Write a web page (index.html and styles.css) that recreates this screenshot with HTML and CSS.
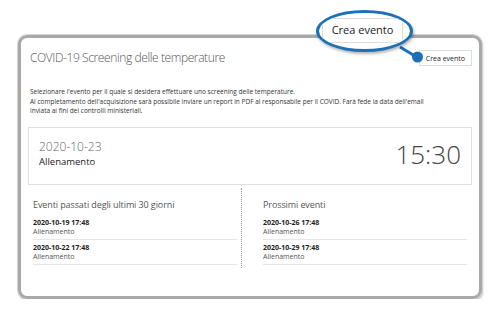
FILE: index.html
```html
<!DOCTYPE html>
<html lang="it">

<head>
    <meta charset="UTF-8">
    <meta name="viewport" content="width=device-width, initial-scale=1.0">
    <title>COVID-19 Screening delle temperature</title>
    <link rel="stylesheet" href="styles.css">
</head>

<body>

    <div class="frame">
        <div class="header">
            <h1 class="title">COVID-19 Screening delle temperature</h1>
            <button class="btn">Crea evento</button>
        </div>

        <p class="intro">
            Selezionare l'evento per il quale si desidera effettuare uno screening delle temperature.<br>
            Al completamento dell'acquisizione sarà possibile inviare un report in PDF al responsabile per il COVID. Farà fede la data dell'email<br>
            inviata ai fini dei controlli ministeriali.
        </p>

        <div class="card">
            <div>
                <div class="card-date">2020-10-23</div>
                <div class="card-name">Allenamento</div>
            </div>
            <div class="card-time">15:30</div>
        </div>

        <div class="columns">
            <div class="col col-left">
                <h2>Eventi passati degli ultimi 30 giorni</h2>
                <div class="row">
                    <div class="row-date">2020-10-19 17:48</div>
                    <div class="row-name">Allenamento</div>
                </div>
                <div class="row">
                    <div class="row-date">2020-10-22 17:48</div>
                    <div class="row-name">Allenamento</div>
                </div>
            </div>
            <div class="col col-right">
                <h2>Prossimi eventi</h2>
                <div class="row">
                    <div class="row-date">2020-10-26 17:48</div>
                    <div class="row-name">Allenamento</div>
                </div>
                <div class="row">
                    <div class="row-date">2020-10-29 17:48</div>
                    <div class="row-name">Allenamento</div>
                </div>
            </div>
        </div>
    </div>

    <!-- callout -->
    <svg class="pointer" width="500" height="313" viewBox="0 0 500 313">
        <line x1="400" y1="47" x2="415" y2="56" stroke="#1c70b6" stroke-width="3" />
        <circle cx="417.5" cy="57" r="5.5" fill="#1c70b6" />
    </svg>
    <div class="bubble">
        <div class="bubble-box">Crea evento</div>
    </div>

</body>

</html>
```

FILE: styles.css
```css
body {
    margin: 0;
    background-color: #fff;
    font-family: "Open Sans", "Liberation Sans", sans-serif;
    color: #333;
}

.frame {
    box-sizing: border-box;
    width: 464px;
    height: 264px;
    margin: 35px 0 0 18px;
    padding: 0 7px;
    border: 3px solid #a9a9a9;
    border-radius: 9px;
    box-shadow: 0 0 0 1px #d4d4d4, 1px 2px 2px rgba(0, 0, 0, 0.25);
}

.header {
    display: flex;
    justify-content: space-between;
    align-items: center;
    height: 16px;
    margin-top: 12px;
}

.title {
    margin: 0 0 0 2px;
    font-size: 12px;
    font-weight: 300;
    line-height: 16px;
    letter-spacing: -0.4px;
    color: #555;
}

.btn {
    height: 16px;
    padding: 0 6px;
    background-color: #fff;
    border: 1px solid #ddd;
    font-family: inherit;
    font-size: 7px;
    color: #222;
}

.intro {
    margin: 21px 0 0 2px;
    font-size: 6.5px;
    line-height: 9.5px;
    color: #333;
}

.card {
    display: flex;
    justify-content: space-between;
    align-items: center;
    margin-top: 11px;
    padding: 11px 10px 15px;
    border: 1px solid #e0e0e0;
}

.card-date {
    font-size: 12px;
    font-weight: 300;
    line-height: 16px;
    color: #666;
}

.card-name {
    font-size: 9.5px;
    line-height: 14px;
    color: #222;
}

.card-time {
    font-size: 26px;
    font-weight: 300;
    line-height: 30px;
    color: #444;
}

.columns {
    display: flex;
    margin-top: 3px;
    padding: 0 5px;
}

.col {
    width: 204px;
    padding: 10px 0 3px;
}

.col-left {
    padding-right: 4px;
    border-right: 1px dotted #999;
}

.col-right {
    padding-left: 21px;
}

.col h2 {
    margin: 0 0 7px;
    font-size: 9px;
    font-weight: 400;
    line-height: 13px;
    letter-spacing: -0.1px;
    color: #555;
}

.row {
    padding-bottom: 3px;
    border-bottom: 1px solid #e6e6e6;
}

.row + .row {
    padding-top: 3px;
}

.row-date {
    font-size: 7px;
    font-weight: 700;
    line-height: 9px;
    color: #222;
}

.row-name {
    font-size: 7px;
    line-height: 9px;
    color: #555;
}

.pointer {
    position: absolute;
    left: 0;
    top: 0;
}

.bubble {
    position: absolute;
    left: 316px;
    top: 10px;
    box-sizing: border-box;
    width: 97px;
    height: 42px;
    background-color: #fff;
    border: 3.5px solid #1c70b6;
    border-radius: 50%;
    overflow: hidden;
    box-shadow: 1px 2px 3px rgba(0, 0, 0, 0.3);
}

.bubble-box {
    position: absolute;
    left: 3px;
    top: 5px;
    box-sizing: border-box;
    width: 81px;
    height: 25px;
    padding-top: 3px;
    border: 1px solid #ddd;
    font-size: 11px;
    line-height: 16px;
    text-align: center;
    color: #222;
}
```
